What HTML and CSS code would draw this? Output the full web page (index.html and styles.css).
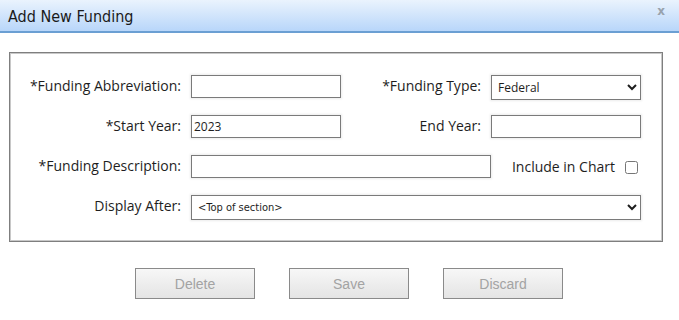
FILE: index.html
```html
<!DOCTYPE html>
<html lang="en">
<head>
  <meta charset="UTF-8" />
  <title>Add New Funding</title>
  <link rel="stylesheet" href="styles.css">
</head>
<body>
<div class="dialog">
  <div class="titlebar">
    <span class="title">Add New Funding</span>
    <span class="close">x</span>
  </div>

  <div class="fieldset">
    <div class="form-grid">
      <label class="field-label">*Funding Abbreviation:</label>
      <input type="text" class="text-input">
      <label class="field-label">*Funding Type:</label>
      <select class="select-input">
        <option>Federal</option>
        <option>State</option>
        <option>Local</option>
      </select>

      <label class="field-label">*Start Year:</label>
      <input type="text" class="text-input" value="2023">
      <label class="field-label">End Year:</label>
      <input type="text" class="text-input">

      <label class="field-label">*Funding Description:</label>
      <input type="text" class="text-input wide">
      <div class="chart-check">
        <label class="field-label" for="includeChart">Include in Chart</label>
        <input type="checkbox" id="includeChart" class="check-input">
      </div>

      <label class="field-label">Display After:</label>
      <select class="select-input full">
        <option>&lt;Top of section&gt;</option>
      </select>
    </div>
  </div>

  <div class="buttons">
    <button class="dlg-button" disabled>Delete</button>
    <button class="dlg-button" disabled>Save</button>
    <button class="dlg-button" disabled>Discard</button>
  </div>
</div>
</body>
</html>
```

FILE: styles.css
```css
body {
  margin: 0;
  background: #ffffff;
  font-family: "Open Sans", "Noto Sans", sans-serif;
  color: #1e1e1e;
}
.titlebar {
  height: 31px;
  background: linear-gradient(to bottom, #eaf3fd, #b8d6fa);
  border-bottom: 2px solid #6b9fd3;
  display: flex;
  align-items: center;
  justify-content: space-between;
  padding: 0 14px 0 8px;
}
.title {
  font-family: "DejaVu Sans Condensed", "Liberation Sans", sans-serif;
  font-size: 16px;
  color: #1a1a1a;
  padding-top: 2px;
}
.close {
  font-family: "DejaVu Sans", sans-serif;
  font-size: 12px;
  font-weight: bold;
  color: #98a2ad;
  align-self: flex-start;
  margin-top: 4px;
}
.fieldset {
  box-sizing: border-box;
  width: 654px;
  margin: 19px 0 0 9px;
  border: 1px solid #7f7f7f;
  box-shadow: inset 0 0 0 1px #c8c8c8;
  padding: 22px 19px 21px 11px;
}
.form-grid {
  display: grid;
  grid-template-columns: 160px 150px 130px 150px;
  grid-auto-rows: 25px;
  column-gap: 10px;
  row-gap: 15px;
}
.field-label {
  font-size: 14px;
  line-height: 22px;
  text-align: right;
  white-space: nowrap;
}
.text-input,
.select-input {
  box-sizing: border-box;
  border: 1px solid #7a7a7a;
  box-shadow: 0 0 2px 1px #ececec;
  font-family: "Open Sans", "Noto Sans", sans-serif;
  font-size: 12px;
  color: #1e1e1e;
  background: #fff;
  margin: 0;
}
.text-input {
  height: 23px;
  width: 150px;
  padding: 0 2px;
}
.text-input.wide {
  width: 300px;
  grid-column: 2 / 4;
}
.select-input {
  height: 25px;
  width: 150px;
  border-radius: 0;
  padding: 0 2px;
}
.select-input.full {
  width: 450px;
  grid-column: 2 / 5;
  font-family: "DejaVu Sans Condensed", "Open Sans", sans-serif;
  font-size: 11px;
}
.chart-check {
  display: flex;
  align-items: center;
  justify-content: flex-end;
  gap: 10px;
  height: 23px;
}
.check-input {
  width: 13px;
  height: 13px;
  margin: 1px 3px 0 0;
}
.buttons {
  display: flex;
  gap: 34px;
  padding: 26px 0 0 135px;
}
.dlg-button {
  width: 120px;
  height: 31px;
  border: 1px solid #8a8a8a;
  background: linear-gradient(to bottom, #f7f7f7, #e4e4e4);
  color: #a3a3a3;
  font-family: "Liberation Sans", sans-serif;
  font-size: 14px;
}
```
